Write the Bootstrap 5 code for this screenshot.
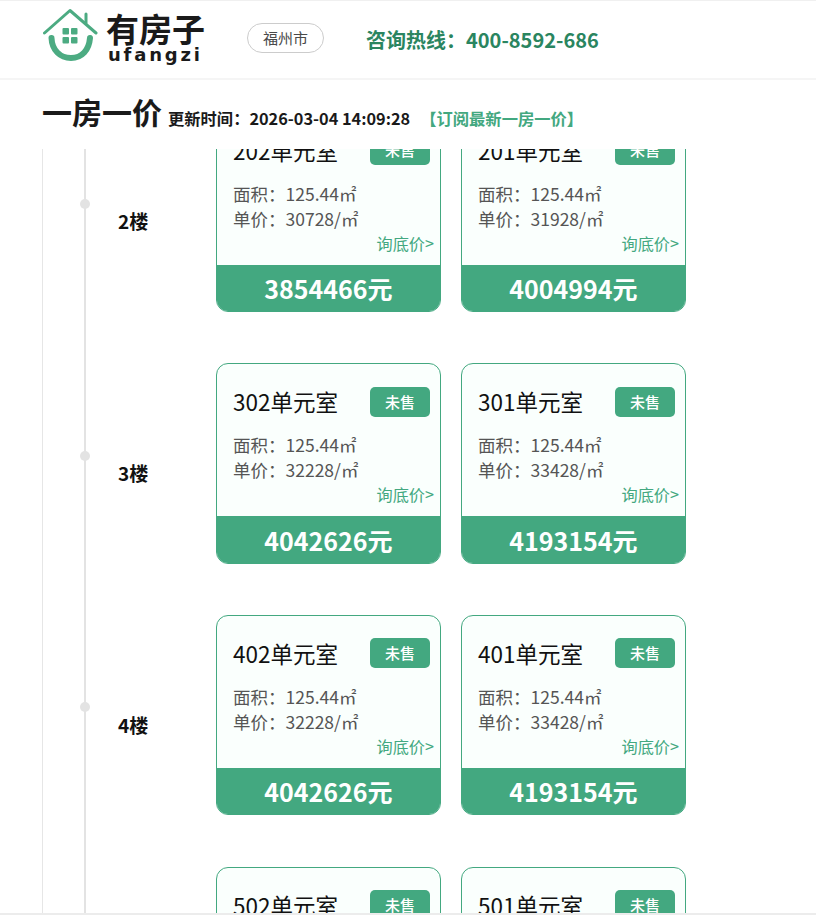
<!DOCTYPE html>
<html lang="zh">
<head>
  <meta charset="UTF-8">
  <title>一房一价</title>
  <meta name="viewport" content="width=device-width, initial-scale=1">
  <link href="https://cdn.jsdelivr.net/npm/bootstrap@5.3.0/dist/css/bootstrap.min.css" rel="stylesheet">
  <style>
    html, body { height: 915px; overflow: hidden; }
    body {
      font-family: "Noto Sans CJK SC", "Noto Sans", sans-serif;
      background: #fff;
      color: #111;
    }
    .top-bar {
      height: 80px;
      padding-left: 42px;
      border-top: 1px solid #f0f0f0;
      border-bottom: 2px solid #f5f5f5;
    }
    .logo-icon { width: 56px; height: 56px; margin-bottom: 8px; flex-shrink: 0; }
    .logo-box { width: 205px; }
    .logo-cn { font-size: 33px; font-weight: 700; line-height: 33px; color: #1a1a1a; margin-left: 8px; }
    .logo-en {
      font-family: "DejaVu Sans", sans-serif;
      font-size: 18px; font-weight: 700; line-height: 15px;
      letter-spacing: 2.8px; color: #1a1a1a; margin-left: 10px; margin-top: 2px;
    }
    .logo-words { margin-top: -5px; }
    .city-pill {
      width: 77px; height: 30px;
      border: 1px solid #ccc; border-radius: 15px;
      font-size: 15px; color: #4a4a4a;
      margin-top: -3px;
    }
    .hotline { font-size: 20px; font-weight: 700; color: #2a8560; margin-left: 42px; line-height: 1; }
    .title-row { height: 69px; padding-left: 42px; padding-top: 16px; }
    .title-main { font-size: 30px; font-weight: 700; line-height: 1; color: #1a1a1a; }
    .title-time { font-size: 16.3px; font-weight: 700; margin: 10px 0 0 6px; color: #1a1a1a; }
    .title-link { font-size: 16.3px; font-weight: 700; color: #43a880; margin: 10px 0 0 10px; text-decoration: none; }
    .scroll-area {
      height: 764px;
      margin-left: 42px;
      border-left: 1px solid #e6e6e6;
    }
    .bottom-line { height: 2px; background: #ececec; }
    .floor-list { margin-top: -37.2px; margin-left: 41px; border-left: 2px solid #e3e3e3; }
    .floor-row { height: 251.6px; }
    .floor-mark { width: 130px; height: 200.4px; }
    .floor-dot {
      width: 10px; height: 10px; border-radius: 50%;
      background: #e3e3e3;
      position: absolute; left: -6px; top: 87.4px;
    }
    .floor-name { font-size: 19px; font-weight: 700; margin-left: 32px; margin-top: 17.8px; color: #111; line-height: 1; }
    .room-pair { gap: 20px; }
    .room-box {
      width: 225px; height: 200.4px;
      border: 1px solid #43a880; border-radius: 12px;
      background: #fafffd;
      overflow: hidden;
    }
    .room-head { padding: 22.4px 10px 0 16px; height: 68px; }
    .room-no { font-size: 22.5px; line-height: 30px; color: #111; margin-top: -0.4px; }
    .room-state {
      width: 60px; height: 30px;
      background: #43a880; color: #fff;
      border-radius: 5px;
      font-size: 15px; font-weight: 500;
    }
    .room-info { padding-left: 16px; font-size: 17.5px; line-height: 25px; color: #555; height: 50px; }
    .room-ask { font-size: 16.2px; line-height: 25px; color: #43a880; text-align: right; padding-right: 6px; height: 34px; }
    .room-price { background: #43a880; color: #fff; font-size: 25px; font-weight: 700; padding-top: 2px; }
  </style>
</head>
<body>

  <div class="top-bar d-flex align-items-center">
    <div class="logo-box d-flex align-items-center">
      <svg class="logo-icon" viewBox="0 0 56 56" fill="none" stroke="#4cab82" stroke-linecap="round" stroke-linejoin="round">
        <path d="M2.5 25 L28 2.5 L54 25" stroke-width="3"/>
        <path d="M44 6 L44 15" stroke-width="3"/>
        <path d="M9.5 30 C10 42 18 50 29 50 C40 50 47 42 48 30" stroke-width="6"/>
        <rect x="20.5" y="20" width="6.5" height="6.5" rx="1" fill="#4cab82" stroke="none"/>
        <rect x="29" y="20" width="6.5" height="6.5" rx="1" fill="#4cab82" stroke="none"/>
        <rect x="20.5" y="29" width="6.5" height="6.5" rx="1" fill="#4cab82" stroke="none"/>
        <rect x="29" y="29" width="6.5" height="6.5" rx="1" fill="#4cab82" stroke="none"/>
      </svg>
      <div class="logo-words">
        <div class="logo-cn">有房子</div>
        <div class="logo-en">ufangzi</div>
      </div>
    </div>
    <div class="city-pill d-flex align-items-center justify-content-center">福州市</div>
    <div class="hotline">咨询热线：400-8592-686</div>
  </div>

  <div class="title-row d-flex align-items-start">
    <span class="title-main">一房一价</span>
    <span class="title-time">更新时间：2026-03-04 14:09:28</span>
    <a class="title-link" href="#">【订阅最新一房一价】</a>
  </div>

  <div class="scroll-area overflow-hidden">
    <div class="floor-list" id="floors"></div>
  </div>
  <div class="bottom-line"></div>

  <script>
    var floors = [
      { n: 2, rooms: [['202', '30728', '3854466'], ['201', '31928', '4004994']] },
      { n: 3, rooms: [['302', '32228', '4042626'], ['301', '33428', '4193154']] },
      { n: 4, rooms: [['402', '32228', '4042626'], ['401', '33428', '4193154']] },
      { n: 5, rooms: [['502', '32228', '4042626'], ['501', '33428', '4193154']] }
    ];
    document.getElementById('floors').innerHTML = floors.map(function (f) {
      var rooms = f.rooms.map(function (r) {
        return '<div class="room-box d-flex flex-column">' +
          '<div class="room-head d-flex justify-content-between align-items-start">' +
            '<span class="room-no">' + r[0] + '单元室</span>' +
            '<span class="room-state d-flex align-items-center justify-content-center">未售</span>' +
          '</div>' +
          '<div class="room-info"><div>面积：125.44㎡</div><div>单价：' + r[1] + '/㎡</div></div>' +
          '<div class="room-ask">询底价&gt;</div>' +
          '<div class="room-price flex-grow-1 d-flex align-items-center justify-content-center">' + r[2] + '元</div>' +
        '</div>';
      }).join('');
      return '<div class="floor-row d-flex">' +
        '<div class="floor-mark position-relative d-flex align-items-center">' +
          '<span class="floor-dot"></span><span class="floor-name">' + f.n + '楼</span>' +
        '</div>' +
        '<div class="room-pair d-flex">' + rooms + '</div>' +
      '</div>';
    }).join('');
  </script>

</body>
</html>
